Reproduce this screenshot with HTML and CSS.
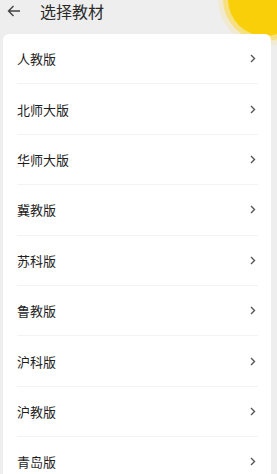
FILE: index.html
```html
<!DOCTYPE html>
<html>
<head>
<meta charset="utf-8">
<link rel="stylesheet" href="styles.css">
</head>
<body>
<div class="page">
  <div class="blob"></div>
  <header class="topbar">
    <svg class="back" width="14" height="12" viewBox="0 0 14 12"><path d="M13 6H1.5M6.5 1L1.5 6l5 5" fill="none" stroke="#444" stroke-width="1.4"/></svg>
    <span class="title">选择教材</span>
  </header>
  <div class="card">
    <div class="row"><span>人教版</span><svg class="chev" width="6" height="9" viewBox="0 0 6 9"><path d="M1 1l3.5 3.5L1 8" fill="none" stroke="#555" stroke-width="1.4"/></svg></div>
    <div class="row"><span>北师大版</span><svg class="chev" width="6" height="9" viewBox="0 0 6 9"><path d="M1 1l3.5 3.5L1 8" fill="none" stroke="#555" stroke-width="1.4"/></svg></div>
    <div class="row"><span>华师大版</span><svg class="chev" width="6" height="9" viewBox="0 0 6 9"><path d="M1 1l3.5 3.5L1 8" fill="none" stroke="#555" stroke-width="1.4"/></svg></div>
    <div class="row"><span>冀教版</span><svg class="chev" width="6" height="9" viewBox="0 0 6 9"><path d="M1 1l3.5 3.5L1 8" fill="none" stroke="#555" stroke-width="1.4"/></svg></div>
    <div class="row"><span>苏科版</span><svg class="chev" width="6" height="9" viewBox="0 0 6 9"><path d="M1 1l3.5 3.5L1 8" fill="none" stroke="#555" stroke-width="1.4"/></svg></div>
    <div class="row"><span>鲁教版</span><svg class="chev" width="6" height="9" viewBox="0 0 6 9"><path d="M1 1l3.5 3.5L1 8" fill="none" stroke="#555" stroke-width="1.4"/></svg></div>
    <div class="row"><span>沪科版</span><svg class="chev" width="6" height="9" viewBox="0 0 6 9"><path d="M1 1l3.5 3.5L1 8" fill="none" stroke="#555" stroke-width="1.4"/></svg></div>
    <div class="row"><span>沪教版</span><svg class="chev" width="6" height="9" viewBox="0 0 6 9"><path d="M1 1l3.5 3.5L1 8" fill="none" stroke="#555" stroke-width="1.4"/></svg></div>
    <div class="row"><span>青岛版</span><svg class="chev" width="6" height="9" viewBox="0 0 6 9"><path d="M1 1l3.5 3.5L1 8" fill="none" stroke="#555" stroke-width="1.4"/></svg></div>
  </div>
</div>
</body>
</html>
```

FILE: styles.css
```css
html, body {
  margin: 0;
  padding: 0;
  background: #eeeeee;
  font-family: "Noto Sans CJK SC", "Noto Sans", sans-serif;
  overflow: hidden;
}
.page {
  position: relative;
  width: 277px;
  height: 474px;
  overflow: hidden;
}
.blob {
  position: absolute;
  left: 228px;
  top: -38px;
  width: 74px;
  height: 74px;
  border-radius: 50%;
  background: #f9cf0a;
  box-shadow: 0 0 0 5px rgba(250, 215, 60, 0.55), 0 0 0 10px rgba(250, 225, 120, 0.25);
}
.topbar {
  position: relative;
  display: flex;
  align-items: center;
  height: 22px;
  padding-left: 7px;
}
.back {
  margin-right: 19px;
}
.title {
  font-size: 16px;
  line-height: 22px;
  color: #2a2a2a;
}
.card {
  position: relative;
  margin: 12px 6px 0 3px;
  background: #ffffff;
  border-radius: 6px;
  padding: 0 13px 0 14px;
}
.row {
  display: flex;
  align-items: center;
  justify-content: space-between;
  height: 49.4px;
  border-bottom: 1px solid #f3f3f3;
  font-size: 13px;
  color: #1e1e1e;
}
.chev {
  margin-right: 2px;
}
```
